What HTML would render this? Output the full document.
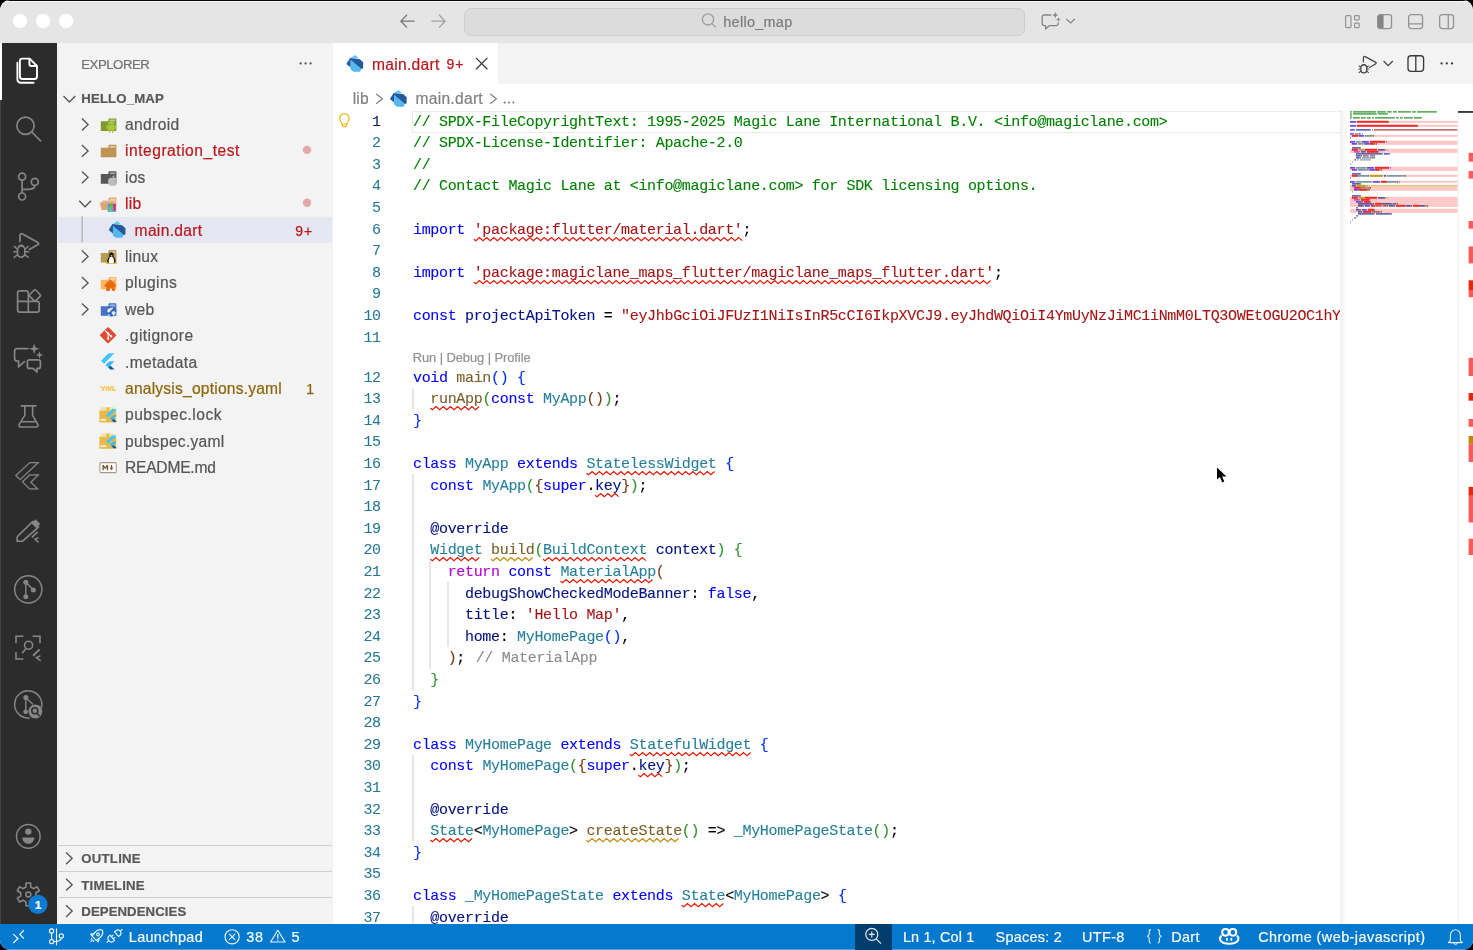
<!DOCTYPE html>
<html><head><meta charset="utf-8"><title>hello_map</title>
<style>
*{box-sizing:border-box;margin:0;padding:0}
html,body{width:1473px;height:950px;overflow:hidden;background:#000;}
body{font-family:"Liberation Sans",sans-serif;font-size:15.6px;color:#555;position:relative}
.win{will-change:transform;position:absolute;left:0;top:0;width:1473px;height:950px;border-radius:10px 10px 10px 10px;overflow:hidden;background:#fff}
.abs{position:absolute}
.t{position:absolute;white-space:pre;-webkit-text-stroke:0.2px}
.titlebar{position:absolute;left:0;top:0;width:1473px;height:43px;background:#e5e5e5;border-top:1px solid #05070c;box-shadow:inset 0 1px 0 #f7f7f7}
.act{position:absolute;left:0;top:43px;width:57.4px;height:881px;background:#2c2c2c;border-left:1px solid #454545}
.side{position:absolute;left:57.4px;top:43px;width:276px;height:881px;background:#f3f3f3}
.tabs{position:absolute;left:333.4px;top:43px;width:1140px;height:41.4px;background:#f3f3f3}
.tab{position:absolute;left:0;top:0;width:165px;height:41.4px;background:#fff}
.status{position:absolute;left:0;top:923.6px;width:1473px;height:26.4px;background:#0479ce;color:#fff;font-size:14.4px;box-shadow:inset 0 -1px 0 #5b9ada}
.mono{font-family:"Liberation Mono",monospace}
svg{position:absolute;overflow:visible}
.row{position:absolute;left:0;width:275.8px;height:26.4px}
.code{-webkit-text-stroke:0.1px;position:absolute;left:413px;max-width:927.2px;overflow:hidden;white-space:pre;font-family:"Liberation Mono",monospace;font-size:15px;letter-spacing:-0.331px;height:22px;line-height:22px;color:#000}
.ln{-webkit-text-stroke:0.05px;position:absolute;left:333.4px;width:47.4px;text-align:right;white-space:pre;font-family:"Liberation Mono",monospace;font-size:15px;letter-spacing:-0.331px;height:22px;line-height:22px;color:#237893}
.c{color:#008000}.k{color:#0000ff}.s{color:#a31515}.ty{color:#267f99}.f{color:#795e26}.v{color:#001080}
.r{color:#af00db}.b1{color:#0431fa}.b2{color:#319331}.b3{color:#7b3814}.g{color:#8a8a8a}
.ig{position:absolute;width:2px;background:#e6e6e6}
</style></head>
<body>
<div class="win">
<div class="titlebar"></div>
<div class="abs" style="left:13.4px;top:14px;width:14px;height:14px;border-radius:50%;background:#fff;box-shadow:0 0 0 0.5px #ececec"></div>
<div class="abs" style="left:36.4px;top:14px;width:14px;height:14px;border-radius:50%;background:#fff;box-shadow:0 0 0 0.5px #ececec"></div>
<div class="abs" style="left:59.4px;top:14px;width:14px;height:14px;border-radius:50%;background:#fff;box-shadow:0 0 0 0.5px #ececec"></div>
<svg style="left:399.50px;top:14.20px;" width="15" height="14.4" viewBox="0 0 15 14.4"><path d="M7 0.8 L0.9 7.2 L7 13.6 M0.9 7.2 H14.6" fill="none" stroke="#767676" stroke-width="1.25"/></svg>
<svg style="left:431.30px;top:14.20px;" width="15" height="14.4" viewBox="0 0 15 14.4"><path d="M8 0.8 L14.1 7.2 L8 13.6 M14.1 7.2 H0.4" fill="none" stroke="#a2a2a2" stroke-width="1.25"/></svg>
<div class="abs" style="left:463.5px;top:8.2px;width:561.8px;height:27.6px;border-radius:7px;background:#dcdcdc;border:1px solid #cdcdcd"></div>
<svg style="left:700.60px;top:13.40px;" width="16" height="16" viewBox="0 0 16 16"><circle cx="7" cy="6.4" r="5.6" fill="none" stroke="#9b9b9b" stroke-width="1.3"/><path d="M11 10.6 L14.8 14.4" stroke="#9b9b9b" stroke-width="1.3" fill="none"/></svg>
<div class="t" style="left:723.30px;top:10.00px;height:24px;line-height:24px;font-size:14.4px;color:#7b7b7b;letter-spacing:0.310px;">hello_map</div>
<svg style="left:1041.00px;top:11.50px;" width="20" height="18" viewBox="0 0 20 18"><path d="M10.2 3 H3.2 a2 2 0 0 0 -2 2 V11.6 a2 2 0 0 0 2 2 H4.6 V17 L8.6 13.6 H15.2 a2 2 0 0 0 2 -2 V10.4" fill="none" stroke="#858585" stroke-width="1.3" stroke-linejoin="round"/><path d="M14.30 0.00 L15.22 2.18 L17.40 3.10 L15.22 4.02 L14.30 6.20 L13.38 4.02 L11.20 3.10 L13.38 2.18 Z" fill="#858585"/><path d="M17.40 5.30 L18.08 6.92 L19.70 7.60 L18.08 8.28 L17.40 9.90 L16.72 8.28 L15.10 7.60 L16.72 6.92 Z" fill="#858585"/></svg>
<svg style="left:1065.60px;top:18.00px;" width="10" height="6" viewBox="0 0 10 6"><path d="M0.4 1 L4.6 5 L8.8 1" fill="none" stroke="#858585" stroke-width="1.2"/></svg>
<svg style="left:1345.00px;top:15.00px;" width="15.4" height="13.2" viewBox="0 0 15.4 13.2"><rect x="0.6" y="0.6" width="5.4" height="12" rx="1.2" fill="none" stroke="#939393" stroke-width="1.2"/><rect x="9.6" y="0.6" width="4.6" height="4.2" rx="0.8" fill="none" stroke="#939393" stroke-width="1.2"/><rect x="9.6" y="8.2" width="4.6" height="4.4" rx="0.8" fill="none" stroke="#939393" stroke-width="1.2"/></svg>
<svg style="left:1376.80px;top:14.00px;" width="15.2" height="15.2" viewBox="0 0 15.2 15.2"><rect x="0.65" y="0.65" width="13.9" height="13.9" rx="2.6" fill="none" stroke="#939393" stroke-width="1.3"/><path d="M3.4 0.65 H6.6 V14.55 H3.4 A2.75 2.75 0 0 1 0.65 11.8 V3.4 A2.75 2.75 0 0 1 3.4 0.65 Z" fill="#858585"/></svg>
<svg style="left:1408.00px;top:14.00px;" width="15.2" height="15.2" viewBox="0 0 15.2 15.2"><rect x="0.65" y="0.65" width="13.9" height="13.9" rx="2.6" fill="none" stroke="#939393" stroke-width="1.3"/><path d="M0.65 9.8 H14.55" stroke="#939393" stroke-width="1.3"/></svg>
<svg style="left:1438.80px;top:14.00px;" width="15.2" height="15.2" viewBox="0 0 15.2 15.2"><rect x="0.65" y="0.65" width="13.9" height="13.9" rx="2.6" fill="none" stroke="#939393" stroke-width="1.3"/><path d="M9.3 0.65 V14.55" stroke="#939393" stroke-width="1.3"/></svg>
<div class="act"></div>
<div class="abs" style="left:0;top:43px;width:1.7px;height:57.4px;background:#fff"></div>
<svg style="left:0;top:0" width="58" height="924" viewBox="0 0 58 924"><path d="M22.3 58.6 H29.6 L37 66 V76.6 a2.4 2.4 0 0 1 -2.4 2.4 H22.3 a2.4 2.4 0 0 1 -2.4 -2.4 V61 a2.4 2.4 0 0 1 2.4 -2.4 Z" fill="none" stroke="#fff" stroke-width="1.9" stroke-linejoin="round"/><path d="M29.4 58.8 V64 a2 2 0 0 0 2 2 H36.8" fill="none" stroke="#fff" stroke-width="1.9"/><path d="M17.4 62.6 V79.4 a3.4 3.4 0 0 0 3.4 3.4 H33.6" fill="none" stroke="#fff" stroke-width="1.9" stroke-linecap="round"/><circle cx="25.5" cy="125.8" r="8.6" fill="none" stroke="#868686" stroke-width="1.7"/><path d="M31.8 132 L40.6 140.8" stroke="#868686" stroke-width="1.7" stroke-linecap="round"/><circle cx="22.1" cy="176.6" r="3.5" fill="none" stroke="#868686" stroke-width="1.7"/><circle cx="22.1" cy="196.5" r="3.5" fill="none" stroke="#868686" stroke-width="1.7"/><circle cx="34.8" cy="181.9" r="3.5" fill="none" stroke="#868686" stroke-width="1.7"/><path d="M22.1 180.2 V192.9 M34.8 185.5 C34.8 189.6 30 189.4 22.1 189.4" fill="none" stroke="#868686" stroke-width="1.7"/><path d="M19.9 241.4 V235.6 a1.8 1.8 0 0 1 2.6 -1.7 L38 242.6 a1.1 1.1 0 0 1 0 2 L29.4 249.6" fill="none" stroke="#868686" stroke-width="1.7" stroke-linecap="round" stroke-linejoin="round"/><path d="M17.6 249.6 a3.6 3.6 0 0 1 7.2 0 V253.6 a3.6 3.6 0 0 1 -7.2 0 Z" fill="none" stroke="#868686" stroke-width="1.6"/><path d="M18.6 247 a2.7 2.7 0 0 1 5.2 0" fill="none" stroke="#868686" stroke-width="1.5"/><path d="M17.4 249.2 L14.2 246.4 M17.4 251.8 H13.8 M17.6 254.6 L14.2 257.4 M25 249.2 L28.2 246.4 M25 251.8 H28.6 M24.8 254.6 L28.2 257.4" stroke="#868686" stroke-width="1.4" stroke-linecap="round"/><path d="M28.3 301.4 V293 a2.2 2.2 0 0 0 -2.2 -2.2 H19.8 a2.2 2.2 0 0 0 -2.2 2.2 V310 a2.2 2.2 0 0 0 2.2 2.2 H37 a2.2 2.2 0 0 0 2.2 -2.2 V303.6 a2.2 2.2 0 0 0 -2.2 -2.2 H17.6 M28.3 301.4 V312.2" fill="none" stroke="#868686" stroke-width="1.7"/><rect x="-4.3" y="-4.3" width="8.6" height="8.6" rx="1.3" transform="translate(34.9 295.4) rotate(45)" fill="none" stroke="#868686" stroke-width="1.7"/><path d="M28 348.6 H17.2 a2.6 2.6 0 0 0 -2.6 2.6 V358.4 a2.6 2.6 0 0 0 2.6 2.6 H18.6 V366.8 L24.4 361.6" fill="none" stroke="#868686" stroke-width="1.7" stroke-linejoin="round" stroke-linecap="round"/><path d="M29.4 359.8 H38.4 a2 2 0 0 1 2 2 V366.4 a2 2 0 0 1 -2 2 H37 V372 L33 368.4 H29.4 a2 2 0 0 1 -2 -2 V361.8 a2 2 0 0 1 2 -2 Z" fill="none" stroke="#868686" stroke-width="1.7" stroke-linejoin="round"/><path d="M34.20 343.40 L35.50 347.50 L39.60 348.80 L35.50 350.10 L34.20 354.20 L32.90 350.10 L28.80 348.80 L32.90 347.50 Z" fill="#868686"/><path d="M39.50 351.20 L40.47 354.03 L43.30 355.00 L40.47 355.97 L39.50 358.80 L38.53 355.97 L35.70 355.00 L38.53 354.03 Z" fill="#868686"/><path d="M21.3 405.9 H35.8 M24.8 406 V415.4 L19.2 424.4 a1.7 1.7 0 0 0 1.5 2.6 H36.3 a1.7 1.7 0 0 0 1.5 -2.6 L32.6 415.4 V406 M21 421.8 H36.2" fill="none" stroke="#868686" stroke-width="1.6" stroke-linecap="round" stroke-linejoin="round"/><path d="M29.8 462.6 H38.2 L20 479.6 L15.8 475.4 Z" fill="none" stroke="#868686" stroke-width="1.3" stroke-linejoin="miter"/><path d="M29.8 474.9 H38.2 L30.9 482.2 L37.6 488.9 H29.6 L22.4 481.8 Z" fill="none" stroke="#868686" stroke-width="1.3" stroke-linejoin="miter"/><path d="M17.2 541.2 V536.8 L32.6 521.6 L38.4 527.2 L22.6 541.2 Z" fill="none" stroke="#868686" stroke-width="1.6" stroke-linejoin="miter"/><path d="M32.4 523.4 L35.6 520.2 L39.4 524 L36.2 527.2 Z" fill="#868686" stroke="#868686" stroke-width="1.2"/><path d="M37.6 531.8 L32 537.4" stroke="#868686" stroke-width="1.8"/><path d="M38.6 537.6 L35 539.2 L38.6 542.4" fill="none" stroke="#868686" stroke-width="1.5"/><circle cx="28.3" cy="589.4" r="13.6" fill="none" stroke="#868686" stroke-width="1.5"/><circle cx="25.8" cy="582.3" r="2.5" fill="#868686"/><circle cx="25.8" cy="596.8" r="2.5" fill="#868686"/><circle cx="33.4" cy="590" r="2.5" fill="#868686"/><path d="M25.8 582.3 V596.8 M25.8 582.3 L33.4 590" stroke="#868686" stroke-width="1.4"/><path d="M23.4 636.2 H16 V643.2 M32.6 636.2 H40 V643.2 M16 652 V659 H23.4" fill="none" stroke="#868686" stroke-width="1.6"/><circle cx="28.6" cy="645.2" r="4" fill="none" stroke="#868686" stroke-width="1.6"/><path d="M26 648.4 L22.2 653.2" stroke="#868686" stroke-width="1.6"/><path d="M39.6 649.4 L33 655.8" stroke="#868686" stroke-width="1.9"/><path d="M40.4 655.6 L36.4 657.6 L40.8 660.8" fill="none" stroke="#868686" stroke-width="1.6"/><path d="M41.4 707.8 A13.6 13.6 0 1 0 29.6 717.9" fill="none" stroke="#868686" stroke-width="1.5"/><circle cx="25.8" cy="697.5" r="2.5" fill="#868686"/><circle cx="25.6" cy="711.8" r="2.4" fill="#868686"/><path d="M25.8 697.5 V711.8 M25.8 697.5 L33 704.4" stroke="#868686" stroke-width="1.4"/><circle cx="35.4" cy="711.5" r="6.9" fill="#868686"/><circle cx="34.8" cy="710.8" r="3" fill="none" stroke="#2c2c2c" stroke-width="1.5"/><path d="M37 713.2 L39.6 716" stroke="#2c2c2c" stroke-width="1.5"/><circle cx="28.3" cy="836.4" r="11.8" fill="none" stroke="#868686" stroke-width="1.5"/><circle cx="28.3" cy="831.6" r="3.2" fill="#868686"/><path d="M22.2 837.4 H34.4 a6.1 6.4 0 0 1 -12.2 0 Z" fill="#868686"/><path d="M25.89 886.98 L26.01 883.03 L30.59 883.03 L30.71 886.98 L33.52 888.60 L37.00 886.73 L39.29 890.70 L35.93 892.78 L35.93 896.02 L39.29 898.10 L37.00 902.07 L33.52 900.20 L30.71 901.82 L30.59 905.77 L26.01 905.77 L25.89 901.82 L23.08 900.20 L19.60 902.07 L17.31 898.10 L20.67 896.02 L20.67 892.78 L17.31 890.70 L19.60 886.73 L23.08 888.60 Z" fill="none" stroke="#868686" stroke-width="1.6" stroke-linejoin="round"/><circle cx="28.3" cy="894.4" r="2.5" fill="none" stroke="#868686" stroke-width="1.5"/><circle cx="37.9" cy="904.4" r="9.6" fill="#0c7bd1"/></svg>
<div class="t" style="left:35.00px;top:892.70px;height:24px;line-height:24px;font-size:11.6px;color:#fff;font-weight:700;">1</div>
<div class="side"></div>
<div class="abs" style="left:57.6px;top:216.5px;width:274px;height:26px;background:#e4e6f1"></div>
<div class="t" style="left:81.30px;top:53.00px;height:24px;line-height:24px;font-size:13.2px;color:#6f6f6f;letter-spacing:-0.479px;">EXPLORER</div>
<div class="t" style="left:81.30px;top:87.00px;height:24px;line-height:24px;font-size:13.2px;color:#585858;font-weight:700;letter-spacing:0.141px;">HELLO_MAP</div>
<div class="t" style="left:125.00px;top:113.00px;height:24px;line-height:24px;font-size:15.6px;color:#555555;letter-spacing:0.367px;">android</div>
<div class="t" style="left:125.00px;top:139.00px;height:24px;line-height:24px;font-size:15.6px;color:#b8181c;letter-spacing:0.516px;">integration_test</div>
<div class="t" style="left:125.00px;top:166.00px;height:24px;line-height:24px;font-size:15.6px;color:#555555;letter-spacing:0.221px;">ios</div>
<div class="t" style="left:125.00px;top:192.00px;height:24px;line-height:24px;font-size:15.6px;color:#b8181c;letter-spacing:0.264px;">lib</div>
<div class="t" style="left:134.60px;top:219.00px;height:24px;line-height:24px;font-size:15.6px;color:#b8181c;letter-spacing:0.309px;">main.dart</div>
<div class="t" style="left:125.00px;top:245.00px;height:24px;line-height:24px;font-size:15.6px;color:#555555;letter-spacing:0.224px;">linux</div>
<div class="t" style="left:125.00px;top:271.00px;height:24px;line-height:24px;font-size:15.6px;color:#555555;letter-spacing:0.397px;">plugins</div>
<div class="t" style="left:125.00px;top:298.00px;height:24px;line-height:24px;font-size:15.6px;color:#555555;letter-spacing:0.264px;">web</div>
<div class="t" style="left:125.00px;top:324.00px;height:24px;line-height:24px;font-size:15.6px;color:#555555;letter-spacing:0.444px;">.gitignore</div>
<div class="t" style="left:125.00px;top:351.00px;height:24px;line-height:24px;font-size:15.6px;color:#555555;letter-spacing:0.338px;">.metadata</div>
<div class="t" style="left:125.00px;top:377.00px;height:24px;line-height:24px;font-size:15.6px;color:#8c650a;letter-spacing:0.211px;">analysis_options.yaml</div>
<div class="t" style="left:125.00px;top:403.00px;height:24px;line-height:24px;font-size:15.6px;color:#555555;letter-spacing:0.506px;">pubspec.lock</div>
<div class="t" style="left:125.00px;top:430.00px;height:24px;line-height:24px;font-size:15.6px;color:#555555;letter-spacing:0.282px;">pubspec.yaml</div>
<div class="t" style="left:125.00px;top:456.00px;height:24px;line-height:24px;font-size:15.6px;color:#555555;letter-spacing:-0.235px;">README.md</div>
<div class="t" style="left:295.20px;top:219.00px;height:24px;line-height:24px;font-size:14.04px;color:#b8181c;letter-spacing:0.900px;-webkit-text-stroke:0.25px;">9+</div>
<div class="t" style="left:306.20px;top:377.00px;height:24px;line-height:24px;font-size:14.04px;color:#8c650a;-webkit-text-stroke:0.25px;">1</div>
<div class="abs" style="left:57.6px;top:845px;width:274px;height:1px;background:#cfcfcf"></div>
<div class="t" style="left:81.30px;top:847.00px;height:24px;line-height:24px;font-size:13.2px;color:#585858;font-weight:700;letter-spacing:0.244px;">OUTLINE</div>
<div class="abs" style="left:57.6px;top:871px;width:274px;height:1px;background:#cfcfcf"></div>
<div class="t" style="left:81.30px;top:874.00px;height:24px;line-height:24px;font-size:13.2px;color:#585858;font-weight:700;letter-spacing:0.257px;">TIMELINE</div>
<div class="abs" style="left:57.6px;top:897px;width:274px;height:1px;background:#cfcfcf"></div>
<div class="t" style="left:81.30px;top:900.00px;height:24px;line-height:24px;font-size:13.2px;color:#585858;font-weight:700;letter-spacing:0.078px;">DEPENDENCIES</div>
<svg style="left:0;top:0" width="334" height="924" viewBox="0 0 334 924"><path d="M63.50 96.00 L69.40 102.00 L75.30 96.00" fill="none" stroke="#555" stroke-width="1.35"/><circle cx="300.6" cy="63.4" r="1.15" fill="#555"/><circle cx="305.6" cy="63.4" r="1.15" fill="#555"/><circle cx="310.6" cy="63.4" r="1.15" fill="#555"/><path d="M81.90 118.60 L88.10 124.50 L81.90 130.40" fill="none" stroke="#555" stroke-width="1.35"/><g transform="translate(100.80 118.40)"><path d="M8.1 0 H15 a0.6 0.6 0 0 1 0.6 0.6 V3 H7.2 Z" fill="#7f9a2c"/><path d="M9.3 1.2 H14.4 V3 H8.7 Z" fill="#f3f3f3" opacity="0.55"/><path d="M0 2.9 H15.6 V12.5 H0 Z" fill="#7f9a2c"/></g><g transform="translate(101.20 119.80)"><path d="M6.6 4.6 a3.4 3.2 0 0 1 6.8 0 Z" fill="#a6c63d"/><rect x="6.6" y="5.1" width="6.8" height="5.6" rx="0.8" fill="#a6c63d"/><rect x="4.9" y="5.2" width="1.3" height="4.2" rx="0.65" fill="#a6c63d"/><rect x="13.8" y="5.2" width="1.3" height="4.2" rx="0.65" fill="#a6c63d"/><rect x="7.8" y="10" width="1.4" height="3.2" rx="0.7" fill="#a6c63d"/><rect x="10.8" y="10" width="1.4" height="3.2" rx="0.7" fill="#a6c63d"/></g><path d="M81.90 145.00 L88.10 150.90 L81.90 156.80" fill="none" stroke="#555" stroke-width="1.35"/><g transform="translate(100.80 144.80)"><path d="M8.1 0 H15 a0.6 0.6 0 0 1 0.6 0.6 V3 H7.2 Z" fill="#c09553"/><path d="M9.3 1.2 H14.4 V3 H8.7 Z" fill="#f3f3f3" opacity="0.55"/><path d="M0 2.9 H15.6 V12.5 H0 Z" fill="#c09553"/></g><path d="M81.90 171.40 L88.10 177.30 L81.90 183.20" fill="none" stroke="#555" stroke-width="1.35"/><g transform="translate(100.80 171.20)"><path d="M8.1 0 H15 a0.6 0.6 0 0 1 0.6 0.6 V3 H7.2 Z" fill="#575757"/><path d="M9.3 1.2 H14.4 V3 H8.7 Z" fill="#f3f3f3" opacity="0.55"/><path d="M0 2.9 H15.6 V12.5 H0 Z" fill="#575757"/></g><g transform="translate(101.80 172.40)"><path d="M10.6 5.6 C8.2 4.6 6 6.4 6.2 9.2 C6.4 11.8 8 14 9.6 13.6 C10.4 13.3 10.9 13.3 11.7 13.6 C13.2 14 14.6 12.4 15.2 10.6 C13.4 9.8 13.4 7.2 15 6.4 C13.8 4.9 12 5 10.6 5.6 Z" fill="#bdbdbd"/><path d="M10.5 5.2 C10.4 3.9 11.4 2.9 12.6 2.8 C12.7 4.1 11.7 5.1 10.5 5.2 Z" fill="#bdbdbd"/></g><path d="M79.20 200.80 L85.10 206.80 L91.00 200.80" fill="none" stroke="#555" stroke-width="1.35"/><g transform="translate(100.80 197.60)"><path d="M8.1 0 H15 a0.6 0.6 0 0 1 0.6 0.6 V3 H7.2 Z" fill="#dea57a"/><path d="M9.3 1.2 H14.4 V3 H8.7 Z" fill="#f3f3f3" opacity="0.55"/><path d="M1.6 2.9 H15.6 V12.5 H1.6 Z" fill="#e9b48a"/><path d="M-1.2 5 H9.6 L11.6 12.5 H0.8 Z" fill="#dea57a"/><rect x="7" y="6" width="2.4" height="7.6" fill="#35b6e6"/><rect x="9.6" y="5.4" width="2.6" height="8.2" fill="#7cba3c"/><rect x="12.4" y="6" width="2.6" height="7.6" fill="#c534b4"/><rect x="6.6" y="13.4" width="8.8" height="0.9" fill="#35b6e6"/><rect x="7" y="7.4" width="2.4" height="0.7" fill="#1f8fb8"/><rect x="9.6" y="7" width="2.6" height="0.7" fill="#5a952a"/><rect x="12.4" y="7.4" width="2.6" height="0.7" fill="#962688"/></g><g transform="translate(108.60 220.80)"><path d="M8.9 0.1 L3.8 3.4 L12.5 3.8 Z" fill="#61c6fb"/><path d="M3.8 3.3 L13.6 4.5 L16.9 7.4 L16.8 13.8 L14.9 14.2 L3.0 4.4 Z" fill="#245a9c"/><path d="M3.4 3.9 L0.1 9.1 L4.4 12.6 L4.4 5 Z" fill="#1f5a9e"/><path d="M4.3 5.0 L15 14.1 L13.8 16.9 L7.2 16.9 L4.3 14.6 Z" fill="#55b7f0"/></g><path d="M81.90 250.60 L88.10 256.50 L81.90 262.40" fill="none" stroke="#555" stroke-width="1.35"/><g transform="translate(100.80 250.10)"><path d="M8.1 0 H15 a0.6 0.6 0 0 1 0.6 0.6 V3 H7.2 Z" fill="#b89a55"/><path d="M9.3 1.2 H14.4 V3 H8.7 Z" fill="#f3f3f3" opacity="0.55"/><path d="M0 2.9 H15.6 V12.5 H0 Z" fill="#b89a55"/></g><g transform="translate(100.80 250.10)"><ellipse cx="10.6" cy="4.8" rx="2.3" ry="2.6" fill="#1a1a1a"/><path d="M8.2 6.4 C6.6 8.6 6 11 6.6 13.4 H14.6 C15.2 11 14.6 8.6 13 6.4 Z" fill="#1a1a1a"/><path d="M9 7.2 C7.8 9.4 7.8 11.6 8.4 13.4 H12.8 C13.4 11.6 13.4 9.4 12.2 7.2 C11.4 6.4 9.8 6.4 9 7.2 Z" fill="#fff"/><path d="M9.4 5.6 L10.6 6.6 L11.8 5.6 L10.6 5 Z" fill="#f5b90b"/><path d="M5.4 12.6 C6.6 11.6 8.4 12.4 8.8 14 H5 Z" fill="#f5b90b"/><path d="M15.8 12.6 C14.6 11.6 12.8 12.4 12.4 14 H16.2 Z" fill="#f5b90b"/></g><path d="M81.90 277.00 L88.10 282.90 L81.90 288.80" fill="none" stroke="#555" stroke-width="1.35"/><g transform="translate(100.80 276.90)"><path d="M8.1 0 H15 a0.6 0.6 0 0 1 0.6 0.6 V3 H7.2 Z" fill="#ffb560"/><path d="M9.3 1.2 H14.4 V3 H8.7 Z" fill="#f3f3f3" opacity="0.55"/><path d="M0 2.9 H15.6 V12.5 H0 Z" fill="#ffb560"/></g><g transform="translate(99.50 274.60)"><g transform="scale(1.1)"><path d="M6.4 6.4 H8.6 C8 4.2 11.6 4.2 11 6.4 H13.6 V8.8 C15.8 8.2 15.8 11.6 13.6 11 V13.6 H11.4 C11.8 11.8 9 11.8 9.4 13.6 H6.4 V11.2 C4 11.8 4 8.2 6.4 8.8 Z" fill="#e96a0c"/><path d="M6.2 12.6 H9.2 V15 H6.2 Z M11.6 12.6 H14 V15 H11.6 Z" fill="#e96a0c"/></g></g><path d="M81.90 303.40 L88.10 309.30 L81.90 315.20" fill="none" stroke="#555" stroke-width="1.35"/><g transform="translate(100.80 303.30)"><path d="M8.1 0 H15 a0.6 0.6 0 0 1 0.6 0.6 V3 H7.2 Z" fill="#4a72c9"/><path d="M9.3 1.2 H14.4 V3 H8.7 Z" fill="#f3f3f3" opacity="0.55"/><path d="M0 2.9 H15.6 V12.5 H0 Z" fill="#4a72c9"/></g><g transform="translate(100.80 302.20)"><circle cx="10.6" cy="9.4" r="5" fill="#2f66b8"/><path d="M6.4 8 C8 5.2 10 6.8 11.6 4.8 C12.6 5.4 12 7 10.6 7.6 C9.6 8.4 9.8 10 8 10.4 C7 10.6 6.2 9.2 6.4 8 Z" fill="#e9f1fb"/><path d="M11 9.6 C12.4 8.6 14.2 9 15 10.4 C14.6 12 13.6 13.2 12.4 13.8 C12.4 12.4 10.2 11.4 11 9.6 Z" fill="#dce9f8"/><path d="M6.8 12 C8 11.6 9.2 12.4 9.4 14 C8.2 13.8 7.2 13 6.8 12 Z" fill="#cfe0f5"/></g><g transform="translate(99.56 326.80)"><rect x="-6" y="-6" width="12" height="12" rx="1" transform="translate(8.5 8.5) rotate(45)" fill="#dd4c35"/><path d="M5.4 3.6 L8.6 6.8 V11.6 M8.6 6.8 L11.4 9.4" stroke="#fff" stroke-width="1.1" fill="none"/><circle cx="8.6" cy="6.6" r="1.15" fill="#fff"/><circle cx="8.6" cy="12" r="1.15" fill="#fff"/><circle cx="11.6" cy="9.6" r="1.15" fill="#fff"/></g><g transform="translate(101.00 353.20) scale(1.0)"><path d="M7.6 0 H13.5 L3 10.5 L0 7.6 Z" fill="#42c5fb"/><path d="M8.5 8 H13.5 L7.2 14.4 L4.4 11.8 Z" fill="#3fb9f5"/><path d="M7.2 14.4 L9.4 16.4 H13.5 L9.4 12.2 Z" fill="#0b5a9c"/></g><g transform="translate(99.4 386.10) scale(0.965)"><g transform="translate(0.00 0.00)"><path d="M0 0 H2 L3.6 1.8 L5.2 0 H7.2 L4.6 2.8 V5 H2.6 V2.8 Z" fill="#f9cb63"/><path d="M6 5 L7.6 0 H9.4 L10.4 2.6 L11.4 0 H13.2 L12 5 H10.6 L11.2 2.4 L10.2 5 H9.2 L8.4 2.4 L7.6 5 Z" fill="#f9cb63"/><path d="M13.2 0 H15 V3.6 H17 V5 H13.2 Z" fill="#f9cb63"/></g></g><g transform="translate(99.40 407.20)"><path d="M2.4 0 H14.4 L16.8 3.4 H0 Z" fill="#f4dfa4"/><path d="M7.2 0 H9.8 L10.4 3.4 H6.6 Z" fill="#e9bd55"/><path d="M0 3.3 H16.8 V14.4 a0.8 0.8 0 0 1 -0.8 0.8 H0.8 a0.8 0.8 0 0 1 -0.8 -0.8 Z" fill="#e8b94b"/><rect x="1.3" y="11.7" width="5.4" height="1.7" fill="#fdf6e3"/></g><g transform="translate(106.20 409.00) scale(0.79)"><path d="M7.6 0 H13.5 L3 10.5 L0 7.6 Z" fill="#42c5fb"/><path d="M8.5 8 H13.5 L7.2 14.4 L4.4 11.8 Z" fill="#3fb9f5"/><path d="M7.2 14.4 L9.4 16.4 H13.5 L9.4 12.2 Z" fill="#0b5a9c"/></g><g transform="translate(99.40 433.60)"><path d="M2.4 0 H14.4 L16.8 3.4 H0 Z" fill="#f4dfa4"/><path d="M7.2 0 H9.8 L10.4 3.4 H6.6 Z" fill="#e9bd55"/><path d="M0 3.3 H16.8 V14.4 a0.8 0.8 0 0 1 -0.8 0.8 H0.8 a0.8 0.8 0 0 1 -0.8 -0.8 Z" fill="#e8b94b"/><rect x="1.3" y="11.7" width="5.4" height="1.7" fill="#fdf6e3"/></g><g transform="translate(106.20 435.40) scale(0.79)"><path d="M7.6 0 H13.5 L3 10.5 L0 7.6 Z" fill="#42c5fb"/><path d="M8.5 8 H13.5 L7.2 14.4 L4.4 11.8 Z" fill="#3fb9f5"/><path d="M7.2 14.4 L9.4 16.4 H13.5 L9.4 12.2 Z" fill="#0b5a9c"/></g><g transform="translate(99.40 462.10)"><rect x="0.5" y="0.5" width="16.4" height="10" rx="1" fill="#fff" stroke="#a89888" stroke-width="1.1"/><path d="M3 8.2 V3 H4.4 L5.9 5.2 L7.4 3 H8.8 V8.2 H7.4 V5.2 L5.9 7.2 L4.4 5.2 V8.2 Z" fill="#7a5636"/><path d="M11.4 3 H12.8 V5.6 H14.2 L12.1 8.2 L10 5.6 H11.4 Z" fill="#7a5636"/></g><circle cx="307" cy="149.9" r="4.2" fill="#e3a9a9"/><circle cx="307" cy="202.7" r="4.2" fill="#e3a9a9"/><rect x="81.6" y="216" width="1.1" height="26.4" fill="#a9a9a9"/><path d="M66.00 852.40 L72.20 858.30 L66.00 864.20" fill="none" stroke="#555" stroke-width="1.35"/><path d="M66.00 878.80 L72.20 884.70 L66.00 890.60" fill="none" stroke="#555" stroke-width="1.35"/><path d="M66.00 905.20 L72.20 911.10 L66.00 917.00" fill="none" stroke="#555" stroke-width="1.35"/></svg>
<div class="tabs"><div class="tab"></div></div>
<div class="t" style="left:372.00px;top:53.00px;height:24px;line-height:24px;font-size:15.6px;color:#b8181c;letter-spacing:0.287px;">main.dart</div>
<div class="t" style="left:446.60px;top:52.00px;height:24px;line-height:24px;font-size:14.04px;color:#b8181c;letter-spacing:0.800px;-webkit-text-stroke:0.25px;">9+</div>
<div class="t" style="left:352.80px;top:87.00px;height:24px;line-height:24px;font-size:15.6px;color:#808080;letter-spacing:0.097px;">lib</div>
<div class="t" style="left:415.40px;top:87.00px;height:24px;line-height:24px;font-size:15.6px;color:#808080;letter-spacing:0.287px;">main.dart</div>
<div class="abs" style="left:412.2px;top:110.8px;width:929px;height:22px;border:1.4px solid #ebebeb;border-right:0"></div>
<div class="ig" style="left:412.00px;top:387.80px;height:21.60px"></div>
<div class="ig" style="left:412.00px;top:474.20px;height:216.00px"></div>
<div class="ig" style="left:412.00px;top:755.00px;height:86.40px"></div>
<div class="ig" style="left:412.00px;top:906.20px;height:21.60px"></div>
<div class="ig" style="left:429.20px;top:560.60px;height:108.00px"></div>
<div class="ig" style="left:447.00px;top:582.20px;height:64.80px"></div>
<div class="ln" style="top:112px;color:#0b216f;">1</div><div class="code" style="top:112px"><span class="c">// SPDX-FileCopyrightText: 1995-2025 Magic Lane International B.V. &lt;info@magiclane.com&gt;</span></div>
<div class="ln" style="top:133px;">2</div><div class="code" style="top:133px"><span class="c">// SPDX-License-Identifier: Apache-2.0</span></div>
<div class="ln" style="top:155px;">3</div><div class="code" style="top:155px"><span class="c">//</span></div>
<div class="ln" style="top:176px;">4</div><div class="code" style="top:176px"><span class="c">// Contact Magic Lane at &lt;info@magiclane.com&gt; for SDK licensing options.</span></div>
<div class="ln" style="top:198px;">5</div>
<div class="ln" style="top:220px;">6</div><div class="code" style="top:220px"><span class="k">import</span> <span class="s">'package:flutter/material.dart'</span>;</div>
<div class="ln" style="top:241px;">7</div>
<div class="ln" style="top:263px;">8</div><div class="code" style="top:263px"><span class="k">import</span> <span class="s">'package:magiclane_maps_flutter/magiclane_maps_flutter.dart'</span>;</div>
<div class="ln" style="top:284px;">9</div>
<div class="ln" style="top:306px;">10</div><div class="code" style="top:306px"><span class="k">const</span> <span class="v">projectApiToken</span> = <span class="s">"eyJhbGciOiJFUzI1NiIsInR5cCI6IkpXVCJ9.eyJhdWQiOiI4YmUyNzJiMC1iNmM0LTQ3OWEtOGU2OC1hYzNjYTI0ZDkxNmUiLCJleHAiOjE3NjI4MTkyMDB9"</span>;</div>
<div class="ln" style="top:328px;">11</div>
<div class="ln" style="top:368px;">12</div><div class="code" style="top:368px"><span class="k">void</span> <span class="f">main</span><span class="b1">()</span> <span class="b1">{</span></div>
<div class="ln" style="top:389px;">13</div><div class="code" style="top:389px">  <span class="f">runApp</span><span class="b2">(</span><span class="k">const</span> <span class="ty">MyApp</span><span class="b3">()</span><span class="b2">)</span>;</div>
<div class="ln" style="top:411px;">14</div><div class="code" style="top:411px"><span class="b1">}</span></div>
<div class="ln" style="top:432px;">15</div>
<div class="ln" style="top:454px;">16</div><div class="code" style="top:454px"><span class="k">class</span> <span class="ty">MyApp</span> <span class="k">extends</span> <span class="ty">StatelessWidget</span> <span class="b1">{</span></div>
<div class="ln" style="top:476px;">17</div><div class="code" style="top:476px">  <span class="k">const</span> <span class="ty">MyApp</span><span class="b2">(</span><span class="b3">{</span><span class="k">super</span>.<span class="v">key</span><span class="b3">}</span><span class="b2">)</span>;</div>
<div class="ln" style="top:497px;">18</div>
<div class="ln" style="top:519px;">19</div><div class="code" style="top:519px">  <span class="v">@override</span></div>
<div class="ln" style="top:540px;">20</div><div class="code" style="top:540px">  <span class="ty">Widget</span> <span class="f">build</span><span class="b2">(</span><span class="ty">BuildContext</span> <span class="v">context</span><span class="b2">)</span> <span class="b2">{</span></div>
<div class="ln" style="top:562px;">21</div><div class="code" style="top:562px">    <span class="r">return</span> <span class="k">const</span> <span class="ty">MaterialApp</span><span class="b3">(</span></div>
<div class="ln" style="top:584px;">22</div><div class="code" style="top:584px">      <span class="v">debugShowCheckedModeBanner</span>: <span class="k">false</span>,</div>
<div class="ln" style="top:605px;">23</div><div class="code" style="top:605px">      <span class="v">title</span>: <span class="s">'Hello Map'</span>,</div>
<div class="ln" style="top:627px;">24</div><div class="code" style="top:627px">      <span class="v">home</span>: <span class="ty">MyHomePage</span><span class="b1">()</span>,</div>
<div class="ln" style="top:648px;">25</div><div class="code" style="top:648px">    <span class="b3">)</span>; <span class="g" style="margin-left:2px">// MaterialApp</span></div>
<div class="ln" style="top:670px;">26</div><div class="code" style="top:670px">  <span class="b2">}</span></div>
<div class="ln" style="top:692px;">27</div><div class="code" style="top:692px"><span class="b1">}</span></div>
<div class="ln" style="top:713px;">28</div>
<div class="ln" style="top:735px;">29</div><div class="code" style="top:735px"><span class="k">class</span> <span class="ty">MyHomePage</span> <span class="k">extends</span> <span class="ty">StatefulWidget</span> <span class="b1">{</span></div>
<div class="ln" style="top:756px;">30</div><div class="code" style="top:756px">  <span class="k">const</span> <span class="ty">MyHomePage</span><span class="b2">(</span><span class="b3">{</span><span class="k">super</span>.<span class="v">key</span><span class="b3">}</span><span class="b2">)</span>;</div>
<div class="ln" style="top:778px;">31</div>
<div class="ln" style="top:800px;">32</div><div class="code" style="top:800px">  <span class="v">@override</span></div>
<div class="ln" style="top:821px;">33</div><div class="code" style="top:821px">  <span class="ty">State</span>&lt;<span class="ty">MyHomePage</span>&gt; <span class="f">createState</span><span class="b2">()</span> =&gt; <span class="ty">_MyHomePageState</span><span class="b2">()</span>;</div>
<div class="ln" style="top:843px;">34</div><div class="code" style="top:843px"><span class="b1">}</span></div>
<div class="ln" style="top:864px;">35</div>
<div class="ln" style="top:886px;">36</div><div class="code" style="top:886px"><span class="k">class</span> <span class="ty">_MyHomePageState</span> <span class="k">extends</span> <span class="ty">State</span>&lt;<span class="ty">MyHomePage</span>&gt; <span class="b1">{</span></div>
<div class="ln" style="top:908px;">37</div><div class="code" style="top:908px">  <span class="v">@override</span></div>
<div class="t" style="left:412.70px;top:346.00px;height:24px;line-height:24px;font-size:12.9px;color:#919191;letter-spacing:-0.062px;">Run | Debug | Profile</div>
<svg style="left:0;top:0" width="1473" height="924" viewBox="0 0 1473 924"><g transform="translate(346.30 54.80)"><path d="M8.9 0.1 L3.8 3.4 L12.5 3.8 Z" fill="#61c6fb"/><path d="M3.8 3.3 L13.6 4.5 L16.9 7.4 L16.8 13.8 L14.9 14.2 L3.0 4.4 Z" fill="#245a9c"/><path d="M3.4 3.9 L0.1 9.1 L4.4 12.6 L4.4 5 Z" fill="#1f5a9e"/><path d="M4.3 5.0 L15 14.1 L13.8 16.9 L7.2 16.9 L4.3 14.6 Z" fill="#55b7f0"/></g><path d="M476 57.9 L487.4 69.3 M487.4 57.9 L476 69.3" stroke="#3b3b3b" stroke-width="1.3"/><g transform="translate(389.80 89.80)"><path d="M8.9 0.1 L3.8 3.4 L12.5 3.8 Z" fill="#61c6fb"/><path d="M3.8 3.3 L13.6 4.5 L16.9 7.4 L16.8 13.8 L14.9 14.2 L3.0 4.4 Z" fill="#245a9c"/><path d="M3.4 3.9 L0.1 9.1 L4.4 12.6 L4.4 5 Z" fill="#1f5a9e"/><path d="M4.3 5.0 L15 14.1 L13.8 16.9 L7.2 16.9 L4.3 14.6 Z" fill="#55b7f0"/></g><path d="M376.2 93.9 L382.4 98.8 L376.2 103.7" fill="none" stroke="#808080" stroke-width="1.25"/><path d="M490.2 93.9 L496.4 98.8 L490.2 103.7" fill="none" stroke="#808080" stroke-width="1.25"/><circle cx="504.6" cy="102.6" r="1.05" fill="#808080"/><circle cx="509" cy="102.6" r="1.05" fill="#808080"/><circle cx="513.4" cy="102.6" r="1.05" fill="#808080"/><path d="M1363.4 62 V57.6 a1.2 1.2 0 0 1 1.8 -1 L1375.8 62.4 a0.8 0.8 0 0 1 0 1.4 L1369.6 67.4" fill="none" stroke="#444" stroke-width="1.2" stroke-linecap="round" stroke-linejoin="round"/><path d="M1360.9 67.8 a2.9 2.9 0 0 1 5.8 0 V70 a2.9 2.9 0 0 1 -5.8 0 Z" fill="none" stroke="#444" stroke-width="1.2"/><path d="M1361.7 66 a2.2 2.2 0 0 1 4.2 0" fill="none" stroke="#444" stroke-width="1.1"/><path d="M1360.8 67.2 L1358.8 65.6 M1360.8 69 H1358.4 M1361 70.9 L1358.8 72.8 M1366.8 67.2 L1368.8 65.6 M1366.8 69 H1369.2 M1366.6 70.9 L1368.8 72.8" stroke="#444" stroke-width="1.1"/><path d="M1383.6 61 L1388.2 65.6 L1392.8 61" fill="none" stroke="#444" stroke-width="1.25"/><rect x="1408" y="55.7" width="15.6" height="15.6" rx="3" fill="none" stroke="#3b3b3b" stroke-width="1.35"/><path d="M1415.8 55.7 V71.3" stroke="#3b3b3b" stroke-width="1.35"/><circle cx="1441.6" cy="63.4" r="1.15" fill="#3b3b3b"/><circle cx="1446.8" cy="63.4" r="1.15" fill="#3b3b3b"/><circle cx="1452" cy="63.4" r="1.15" fill="#3b3b3b"/><path d="M341.6 122.3 A4.75 4.75 0 1 1 347.2 122.3 L346.7 125 Q346.6 126.7 344.4 126.7 Q342.2 126.7 342.1 125 Z" fill="none" stroke="#e3bb22" stroke-width="1.25" stroke-linejoin="round"/><path d="M342.2 124.2 H346.6" stroke="#e3bb22" stroke-width="1.1"/><path d="M473.7 239.2 L475.8 240.7 L479.4 237.5 L483.0 240.7 L486.6 237.5 L490.2 240.7 L493.8 237.5 L497.4 240.7 L501.0 237.5 L504.6 240.7 L508.2 237.5 L511.8 240.7 L515.4 237.5 L519.0 240.7 L522.6 237.5 L526.2 240.7 L529.8 237.5 L533.4 240.7 L537.0 237.5 L540.6 240.7 L544.2 237.5 L547.8 240.7 L551.4 237.5 L555.0 240.7 L558.6 237.5 L562.2 240.7 L565.8 237.5 L569.4 240.7 L573.0 237.5 L576.6 240.7 L580.2 237.5 L583.8 240.7 L587.4 237.5 L591.0 240.7 L594.6 237.5 L598.2 240.7 L601.8 237.5 L605.4 240.7 L609.0 237.5 L612.6 240.7 L616.2 237.5 L619.8 240.7 L623.4 237.5 L627.0 240.7 L630.6 237.5 L634.2 240.7 L637.8 237.5 L641.4 240.7 L645.0 237.5 L648.6 240.7 L652.2 237.5 L655.8 240.7 L659.4 237.5 L663.0 240.7 L666.6 237.5 L670.2 240.7 L673.8 237.5 L677.4 240.7 L681.0 237.5 L684.6 240.7 L688.2 237.5 L691.8 240.7 L695.4 237.5 L699.0 240.7 L702.6 237.5 L706.2 240.7 L709.8 237.5 L713.4 240.7 L717.0 237.5 L720.6 240.7 L724.2 237.5 L727.8 240.7 L731.4 237.5 L735.0 240.7 L738.6 237.5 L742.2 240.7" fill="none" stroke="#e51400" stroke-width="1.12"/><path d="M473.7 282.2 L475.8 283.7 L479.4 280.5 L483.0 283.7 L486.6 280.5 L490.2 283.7 L493.8 280.5 L497.4 283.7 L501.0 280.5 L504.6 283.7 L508.2 280.5 L511.8 283.7 L515.4 280.5 L519.0 283.7 L522.6 280.5 L526.2 283.7 L529.8 280.5 L533.4 283.7 L537.0 280.5 L540.6 283.7 L544.2 280.5 L547.8 283.7 L551.4 280.5 L555.0 283.7 L558.6 280.5 L562.2 283.7 L565.8 280.5 L569.4 283.7 L573.0 280.5 L576.6 283.7 L580.2 280.5 L583.8 283.7 L587.4 280.5 L591.0 283.7 L594.6 280.5 L598.2 283.7 L601.8 280.5 L605.4 283.7 L609.0 280.5 L612.6 283.7 L616.2 280.5 L619.8 283.7 L623.4 280.5 L627.0 283.7 L630.6 280.5 L634.2 283.7 L637.8 280.5 L641.4 283.7 L645.0 280.5 L648.6 283.7 L652.2 280.5 L655.8 283.7 L659.4 280.5 L663.0 283.7 L666.6 280.5 L670.2 283.7 L673.8 280.5 L677.4 283.7 L681.0 280.5 L684.6 283.7 L688.2 280.5 L691.8 283.7 L695.4 280.5 L699.0 283.7 L702.6 280.5 L706.2 283.7 L709.8 280.5 L713.4 283.7 L717.0 280.5 L720.6 283.7 L724.2 280.5 L727.8 283.7 L731.4 280.5 L735.0 283.7 L738.6 280.5 L742.2 283.7 L745.8 280.5 L749.4 283.7 L753.0 280.5 L756.6 283.7 L760.2 280.5 L763.8 283.7 L767.4 280.5 L771.0 283.7 L774.6 280.5 L778.2 283.7 L781.8 280.5 L785.4 283.7 L789.0 280.5 L792.6 283.7 L796.2 280.5 L799.8 283.7 L803.4 280.5 L807.0 283.7 L810.6 280.5 L814.2 283.7 L817.8 280.5 L821.4 283.7 L825.0 280.5 L828.6 283.7 L832.2 280.5 L835.8 283.7 L839.4 280.5 L843.0 283.7 L846.6 280.5 L850.2 283.7 L853.8 280.5 L857.4 283.7 L861.0 280.5 L864.6 283.7 L868.2 280.5 L871.8 283.7 L875.4 280.5 L879.0 283.7 L882.6 280.5 L886.2 283.7 L889.8 280.5 L893.4 283.7 L897.0 280.5 L900.6 283.7 L904.2 280.5 L907.8 283.7 L911.4 280.5 L915.0 283.7 L918.6 280.5 L922.2 283.7 L925.8 280.5 L929.4 283.7 L933.0 280.5 L936.6 283.7 L940.2 280.5 L943.8 283.7 L947.4 280.5 L951.0 283.7 L954.6 280.5 L958.2 283.7 L961.8 280.5 L965.4 283.7 L969.0 280.5 L972.6 283.7 L976.2 280.5 L979.8 283.7 L983.4 280.5 L987.0 283.7 L990.6 280.5" fill="none" stroke="#e51400" stroke-width="1.12"/><path d="M430.3 408.2 L432.4 409.7 L436.0 406.5 L439.6 409.7 L443.2 406.5 L446.8 409.7 L450.4 406.5 L454.0 409.7 L457.6 406.5 L461.2 409.7 L464.8 406.5 L468.4 409.7 L472.0 406.5 L475.6 409.7 L479.2 406.5" fill="none" stroke="#e51400" stroke-width="1.12"/><path d="M586.4 473.2 L588.5 474.7 L592.1 471.5 L595.7 474.7 L599.3 471.5 L602.9 474.7 L606.5 471.5 L610.1 474.7 L613.7 471.5 L617.3 474.7 L620.9 471.5 L624.5 474.7 L628.1 471.5 L631.7 474.7 L635.3 471.5 L638.9 474.7 L642.5 471.5 L646.1 474.7 L649.7 471.5 L653.3 474.7 L656.9 471.5 L660.5 474.7 L664.1 471.5 L667.7 474.7 L671.3 471.5 L674.9 474.7 L678.5 471.5 L682.1 474.7 L685.7 471.5 L689.3 474.7 L692.9 471.5 L696.5 474.7 L700.1 471.5 L703.7 474.7 L707.3 471.5 L710.9 474.7 L714.5 471.5" fill="none" stroke="#e51400" stroke-width="1.12"/><path d="M595.0 495.2 L597.1 496.7 L600.7 493.5 L604.3 496.7 L607.9 493.5 L611.5 496.7 L615.1 493.5 L618.7 496.7" fill="none" stroke="#e51400" stroke-width="1.12"/><path d="M430.3 559.2 L432.4 560.7 L436.0 557.5 L439.6 560.7 L443.2 557.5 L446.8 560.7 L450.4 557.5 L454.0 560.7 L457.6 557.5 L461.2 560.7 L464.8 557.5 L468.4 560.7 L472.0 557.5 L475.6 560.7 L479.2 557.5" fill="none" stroke="#e51400" stroke-width="1.12"/><path d="M491.0 559.2 L493.1 560.7 L496.7 557.5 L500.3 560.7 L503.9 557.5 L507.5 560.7 L511.1 557.5 L514.7 560.7 L518.3 557.5 L521.9 560.7 L525.5 557.5 L529.1 560.7 L532.7 557.5" fill="none" stroke="#bf8803" stroke-width="1.12"/><path d="M543.0 559.2 L545.1 560.7 L548.7 557.5 L552.3 560.7 L555.9 557.5 L559.5 560.7 L563.1 557.5 L566.7 560.7 L570.3 557.5 L573.9 560.7 L577.5 557.5 L581.1 560.7 L584.7 557.5 L588.3 560.7 L591.9 557.5 L595.5 560.7 L599.1 557.5 L602.7 560.7 L606.3 557.5 L609.9 560.7 L613.5 557.5 L617.1 560.7 L620.7 557.5 L624.3 560.7 L627.9 557.5 L631.5 560.7 L635.1 557.5 L638.7 560.7 L642.3 557.5 L645.9 560.7" fill="none" stroke="#e51400" stroke-width="1.12"/><path d="M560.4 581.2 L562.5 582.7 L566.1 579.5 L569.7 582.7 L573.3 579.5 L576.9 582.7 L580.5 579.5 L584.1 582.7 L587.7 579.5 L591.3 582.7 L594.9 579.5 L598.5 582.7 L602.1 579.5 L605.7 582.7 L609.3 579.5 L612.9 582.7 L616.5 579.5 L620.1 582.7 L623.7 579.5 L627.3 582.7 L630.9 579.5 L634.5 582.7 L638.1 579.5 L641.7 582.7 L645.3 579.5 L648.9 582.7 L652.5 579.5" fill="none" stroke="#e51400" stroke-width="1.12"/><path d="M629.7 754.2 L631.8 755.7 L635.4 752.5 L639.0 755.7 L642.6 752.5 L646.2 755.7 L649.8 752.5 L653.4 755.7 L657.0 752.5 L660.6 755.7 L664.2 752.5 L667.8 755.7 L671.4 752.5 L675.0 755.7 L678.6 752.5 L682.2 755.7 L685.8 752.5 L689.4 755.7 L693.0 752.5 L696.6 755.7 L700.2 752.5 L703.8 755.7 L707.4 752.5 L711.0 755.7 L714.6 752.5 L718.2 755.7 L721.8 752.5 L725.4 755.7 L729.0 752.5 L732.6 755.7 L736.2 752.5 L739.8 755.7 L743.4 752.5 L747.0 755.7 L750.6 752.5" fill="none" stroke="#e51400" stroke-width="1.12"/><path d="M638.4 775.2 L640.5 776.7 L644.1 773.5 L647.7 776.7 L651.3 773.5 L654.9 776.7 L658.5 773.5 L662.1 776.7" fill="none" stroke="#e51400" stroke-width="1.12"/><path d="M430.3 840.2 L432.4 841.7 L436.0 838.5 L439.6 841.7 L443.2 838.5 L446.8 841.7 L450.4 838.5 L454.0 841.7 L457.6 838.5 L461.2 841.7 L464.8 838.5 L468.4 841.7 L472.0 838.5" fill="none" stroke="#e51400" stroke-width="1.12"/><path d="M586.4 840.2 L588.5 841.7 L592.1 838.5 L595.7 841.7 L599.3 838.5 L602.9 841.7 L606.5 838.5 L610.1 841.7 L613.7 838.5 L617.3 841.7 L620.9 838.5 L624.5 841.7 L628.1 838.5 L631.7 841.7 L635.3 838.5 L638.9 841.7 L642.5 838.5 L646.1 841.7 L649.7 838.5 L653.3 841.7 L656.9 838.5 L660.5 841.7 L664.1 838.5 L667.7 841.7 L671.3 838.5 L674.9 841.7 L678.5 838.5" fill="none" stroke="#bf8803" stroke-width="1.12"/><path d="M681.7 905.2 L683.8 906.7 L687.4 903.5 L691.0 906.7 L694.6 903.5 L698.2 906.7 L701.8 903.5 L705.4 906.7 L709.0 903.5 L712.6 906.7 L716.2 903.5 L719.8 906.7 L723.4 903.5" fill="none" stroke="#e51400" stroke-width="1.12"/></svg>
<div class="abs" style="left:1340.4px;top:110.4px;width:7px;height:813.2px;background:linear-gradient(to right,rgba(0,0,0,0.055),rgba(0,0,0,0))"></div>
<svg style="left:0;top:0" width="1473" height="924" viewBox="0 0 1473 924"><rect x="1350.0" y="120.8" width="107.6" height="2" fill="#ffc4c4"/><rect x="1350.0" y="124.8" width="107.6" height="2" fill="#ffc4c4"/><rect x="1350.0" y="134.8" width="107.6" height="2" fill="#ffc4c4"/><rect x="1350.0" y="140.8" width="107.6" height="2" fill="#ffc4c4"/><rect x="1350.0" y="142.8" width="107.6" height="2" fill="#ffc4c4"/><rect x="1350.0" y="148.8" width="107.6" height="2" fill="#ffc4c4"/><rect x="1350.0" y="150.8" width="107.6" height="2" fill="#ffc4c4"/><rect x="1350.0" y="166.8" width="107.6" height="2" fill="#ffc4c4"/><rect x="1350.0" y="168.8" width="107.6" height="2" fill="#ffc4c4"/><rect x="1350.0" y="174.8" width="107.6" height="2" fill="#ffc4c4"/><rect x="1350.0" y="180.8" width="107.6" height="2" fill="#ffc4c4"/><rect x="1350.0" y="186.8" width="107.6" height="2" fill="#ffc4c4"/><rect x="1350.0" y="188.8" width="107.6" height="2" fill="#ffc4c4"/><rect x="1350.0" y="196.8" width="107.6" height="2" fill="#ffc4c4"/><rect x="1350.0" y="198.8" width="107.6" height="2" fill="#ffc4c4"/><rect x="1350.0" y="200.8" width="107.6" height="2" fill="#ffc4c4"/><rect x="1350.0" y="202.8" width="107.6" height="2" fill="#ffc4c4"/><rect x="1350.0" y="204.8" width="107.6" height="2" fill="#ffc4c4"/><rect x="1350.0" y="208.8" width="107.6" height="2" fill="#ffc4c4"/><rect x="1350.0" y="210.8" width="107.6" height="2" fill="#ffc4c4"/><rect x="1350.0" y="184.8" width="107.6" height="2" fill="#e6c98a"/><rect x="1350.0" y="111.0" width="1.8" height="1.7" fill="#008000" opacity="0.62"/><rect x="1353.0" y="111.0" width="22.8" height="1.7" fill="#008000" opacity="0.62"/><rect x="1377.0" y="111.0" width="8.8" height="1.7" fill="#008000" opacity="0.62"/><rect x="1387.0" y="111.0" width="4.8" height="1.7" fill="#008000" opacity="0.62"/><rect x="1393.0" y="111.0" width="3.8" height="1.7" fill="#008000" opacity="0.62"/><rect x="1398.0" y="111.0" width="12.8" height="1.7" fill="#008000" opacity="0.62"/><rect x="1412.0" y="111.0" width="3.8" height="1.7" fill="#008000" opacity="0.62"/><rect x="1417.0" y="111.0" width="19.8" height="1.7" fill="#008000" opacity="0.62"/><rect x="1350.0" y="113.0" width="1.8" height="1.7" fill="#008000" opacity="0.62"/><rect x="1353.0" y="113.0" width="23.8" height="1.7" fill="#008000" opacity="0.62"/><rect x="1378.0" y="113.0" width="9.8" height="1.7" fill="#008000" opacity="0.62"/><rect x="1350.0" y="115.0" width="1.8" height="1.7" fill="#008000" opacity="0.62"/><rect x="1350.0" y="117.0" width="1.8" height="1.7" fill="#008000" opacity="0.62"/><rect x="1353.0" y="117.0" width="6.8" height="1.7" fill="#008000" opacity="0.62"/><rect x="1361.0" y="117.0" width="4.8" height="1.7" fill="#008000" opacity="0.62"/><rect x="1367.0" y="117.0" width="3.8" height="1.7" fill="#008000" opacity="0.62"/><rect x="1372.0" y="117.0" width="1.8" height="1.7" fill="#008000" opacity="0.62"/><rect x="1375.0" y="117.0" width="19.8" height="1.7" fill="#008000" opacity="0.62"/><rect x="1396.0" y="117.0" width="2.8" height="1.7" fill="#008000" opacity="0.62"/><rect x="1400.0" y="117.0" width="2.8" height="1.7" fill="#008000" opacity="0.62"/><rect x="1404.0" y="117.0" width="8.8" height="1.7" fill="#008000" opacity="0.62"/><rect x="1414.0" y="117.0" width="7.8" height="1.7" fill="#008000" opacity="0.62"/><rect x="1350.0" y="121.0" width="5.8" height="1.7" fill="#0000ff" opacity="0.62"/><rect x="1357.0" y="120.8" width="31.0" height="2" fill="#f22a2a"/><rect x="1388.0" y="121.0" width="0.8" height="1.7" fill="#000000" opacity="0.62"/><rect x="1350.0" y="125.0" width="5.8" height="1.7" fill="#0000ff" opacity="0.62"/><rect x="1357.0" y="124.8" width="60.0" height="2" fill="#f22a2a"/><rect x="1417.0" y="125.0" width="0.8" height="1.7" fill="#000000" opacity="0.62"/><rect x="1350.0" y="129.0" width="4.8" height="1.7" fill="#0000ff" opacity="0.62"/><rect x="1356.0" y="129.0" width="14.8" height="1.7" fill="#001080" opacity="0.62"/><rect x="1372.0" y="129.0" width="0.8" height="1.7" fill="#000000" opacity="0.62"/><rect x="1374.0" y="129.0" width="83.6" height="1.7" fill="#a31515" opacity="0.62"/><rect x="1350.0" y="133.0" width="3.8" height="1.7" fill="#0000ff" opacity="0.62"/><rect x="1355.0" y="133.0" width="3.8" height="1.7" fill="#795e26" opacity="0.62"/><rect x="1359.0" y="133.0" width="1.8" height="1.7" fill="#0431fa" opacity="0.62"/><rect x="1362.0" y="133.0" width="0.8" height="1.7" fill="#0431fa" opacity="0.62"/><rect x="1352.0" y="134.8" width="6.0" height="2" fill="#f22a2a"/><rect x="1358.0" y="135.0" width="0.8" height="1.7" fill="#319331" opacity="0.62"/><rect x="1359.0" y="135.0" width="4.8" height="1.7" fill="#0000ff" opacity="0.62"/><rect x="1365.0" y="135.0" width="4.8" height="1.7" fill="#267f99" opacity="0.62"/><rect x="1370.0" y="135.0" width="1.8" height="1.7" fill="#7b3814" opacity="0.62"/><rect x="1372.0" y="135.0" width="0.8" height="1.7" fill="#319331" opacity="0.62"/><rect x="1373.0" y="135.0" width="0.8" height="1.7" fill="#000000" opacity="0.62"/><rect x="1350.0" y="137.0" width="0.8" height="1.7" fill="#0431fa" opacity="0.62"/><rect x="1350.0" y="141.0" width="4.8" height="1.7" fill="#0000ff" opacity="0.62"/><rect x="1356.0" y="141.0" width="4.8" height="1.7" fill="#267f99" opacity="0.62"/><rect x="1362.0" y="141.0" width="6.8" height="1.7" fill="#0000ff" opacity="0.62"/><rect x="1370.0" y="140.8" width="15.0" height="2" fill="#f22a2a"/><rect x="1386.0" y="141.0" width="0.8" height="1.7" fill="#0431fa" opacity="0.62"/><rect x="1352.0" y="143.0" width="4.8" height="1.7" fill="#0000ff" opacity="0.62"/><rect x="1358.0" y="143.0" width="4.8" height="1.7" fill="#267f99" opacity="0.62"/><rect x="1363.0" y="143.0" width="0.8" height="1.7" fill="#319331" opacity="0.62"/><rect x="1364.0" y="143.0" width="0.8" height="1.7" fill="#7b3814" opacity="0.62"/><rect x="1365.0" y="143.0" width="4.8" height="1.7" fill="#0000ff" opacity="0.62"/><rect x="1370.0" y="143.0" width="0.8" height="1.7" fill="#000000" opacity="0.62"/><rect x="1371.0" y="142.8" width="3.0" height="2" fill="#f22a2a"/><rect x="1374.0" y="143.0" width="0.8" height="1.7" fill="#7b3814" opacity="0.62"/><rect x="1375.0" y="143.0" width="0.8" height="1.7" fill="#319331" opacity="0.62"/><rect x="1376.0" y="143.0" width="0.8" height="1.7" fill="#000000" opacity="0.62"/><rect x="1352.0" y="147.0" width="8.8" height="1.7" fill="#001080" opacity="0.62"/><rect x="1352.0" y="148.8" width="6.0" height="2" fill="#f22a2a"/><rect x="1359.0" y="148.8" width="5.0" height="2" fill="#c99a1a"/><rect x="1364.0" y="149.0" width="0.8" height="1.7" fill="#319331" opacity="0.62"/><rect x="1365.0" y="148.8" width="12.0" height="2" fill="#f22a2a"/><rect x="1378.0" y="149.0" width="6.8" height="1.7" fill="#001080" opacity="0.62"/><rect x="1385.0" y="149.0" width="0.8" height="1.7" fill="#319331" opacity="0.62"/><rect x="1387.0" y="149.0" width="0.8" height="1.7" fill="#319331" opacity="0.62"/><rect x="1354.0" y="151.0" width="5.8" height="1.7" fill="#af00db" opacity="0.62"/><rect x="1361.0" y="151.0" width="4.8" height="1.7" fill="#0000ff" opacity="0.62"/><rect x="1367.0" y="150.8" width="11.0" height="2" fill="#f22a2a"/><rect x="1378.0" y="151.0" width="0.8" height="1.7" fill="#7b3814" opacity="0.62"/><rect x="1356.0" y="153.0" width="25.8" height="1.7" fill="#001080" opacity="0.62"/><rect x="1382.0" y="153.0" width="0.8" height="1.7" fill="#000000" opacity="0.62"/><rect x="1384.0" y="153.0" width="4.8" height="1.7" fill="#0000ff" opacity="0.62"/><rect x="1389.0" y="153.0" width="0.8" height="1.7" fill="#000000" opacity="0.62"/><rect x="1356.0" y="155.0" width="4.8" height="1.7" fill="#001080" opacity="0.62"/><rect x="1361.0" y="155.0" width="0.8" height="1.7" fill="#000000" opacity="0.62"/><rect x="1363.0" y="155.0" width="5.8" height="1.7" fill="#a31515" opacity="0.62"/><rect x="1370.0" y="155.0" width="3.8" height="1.7" fill="#a31515" opacity="0.62"/><rect x="1374.0" y="155.0" width="0.8" height="1.7" fill="#000000" opacity="0.62"/><rect x="1356.0" y="157.0" width="3.8" height="1.7" fill="#001080" opacity="0.62"/><rect x="1360.0" y="157.0" width="0.8" height="1.7" fill="#000000" opacity="0.62"/><rect x="1362.0" y="157.0" width="9.8" height="1.7" fill="#267f99" opacity="0.62"/><rect x="1372.0" y="157.0" width="1.8" height="1.7" fill="#0431fa" opacity="0.62"/><rect x="1374.0" y="157.0" width="0.8" height="1.7" fill="#000000" opacity="0.62"/><rect x="1354.0" y="159.0" width="0.8" height="1.7" fill="#7b3814" opacity="0.62"/><rect x="1355.0" y="159.0" width="0.8" height="1.7" fill="#000000" opacity="0.62"/><rect x="1357.0" y="159.0" width="1.8" height="1.7" fill="#8a8a8a" opacity="0.62"/><rect x="1360.0" y="159.0" width="10.8" height="1.7" fill="#8a8a8a" opacity="0.62"/><rect x="1352.0" y="161.0" width="0.8" height="1.7" fill="#319331" opacity="0.62"/><rect x="1350.0" y="163.0" width="0.8" height="1.7" fill="#0431fa" opacity="0.62"/><rect x="1350.0" y="167.0" width="4.8" height="1.7" fill="#0000ff" opacity="0.62"/><rect x="1356.0" y="167.0" width="9.8" height="1.7" fill="#267f99" opacity="0.62"/><rect x="1367.0" y="167.0" width="6.8" height="1.7" fill="#0000ff" opacity="0.62"/><rect x="1375.0" y="166.8" width="14.0" height="2" fill="#f22a2a"/><rect x="1390.0" y="167.0" width="0.8" height="1.7" fill="#0431fa" opacity="0.62"/><rect x="1352.0" y="169.0" width="4.8" height="1.7" fill="#0000ff" opacity="0.62"/><rect x="1358.0" y="169.0" width="9.8" height="1.7" fill="#267f99" opacity="0.62"/><rect x="1368.0" y="169.0" width="0.8" height="1.7" fill="#319331" opacity="0.62"/><rect x="1369.0" y="169.0" width="0.8" height="1.7" fill="#7b3814" opacity="0.62"/><rect x="1370.0" y="169.0" width="4.8" height="1.7" fill="#0000ff" opacity="0.62"/><rect x="1375.0" y="169.0" width="0.8" height="1.7" fill="#000000" opacity="0.62"/><rect x="1376.0" y="168.8" width="3.0" height="2" fill="#f22a2a"/><rect x="1379.0" y="169.0" width="0.8" height="1.7" fill="#7b3814" opacity="0.62"/><rect x="1380.0" y="169.0" width="0.8" height="1.7" fill="#319331" opacity="0.62"/><rect x="1381.0" y="169.0" width="0.8" height="1.7" fill="#000000" opacity="0.62"/><rect x="1352.0" y="173.0" width="8.8" height="1.7" fill="#001080" opacity="0.62"/><rect x="1352.0" y="174.8" width="5.0" height="2" fill="#f22a2a"/><rect x="1357.0" y="175.0" width="0.8" height="1.7" fill="#000000" opacity="0.62"/><rect x="1358.0" y="175.0" width="9.8" height="1.7" fill="#267f99" opacity="0.62"/><rect x="1368.0" y="175.0" width="0.8" height="1.7" fill="#000000" opacity="0.62"/><rect x="1370.0" y="174.8" width="11.0" height="2" fill="#c99a1a"/><rect x="1381.0" y="175.0" width="1.8" height="1.7" fill="#319331" opacity="0.62"/><rect x="1384.0" y="175.0" width="1.8" height="1.7" fill="#000000" opacity="0.62"/><rect x="1387.0" y="175.0" width="15.8" height="1.7" fill="#267f99" opacity="0.62"/><rect x="1403.0" y="175.0" width="1.8" height="1.7" fill="#319331" opacity="0.62"/><rect x="1405.0" y="175.0" width="0.8" height="1.7" fill="#000000" opacity="0.62"/><rect x="1350.0" y="177.0" width="0.8" height="1.7" fill="#0431fa" opacity="0.62"/><rect x="1350.0" y="181.0" width="4.8" height="1.7" fill="#0000ff" opacity="0.62"/><rect x="1356.0" y="181.0" width="15.8" height="1.7" fill="#267f99" opacity="0.62"/><rect x="1373.0" y="181.0" width="6.8" height="1.7" fill="#0000ff" opacity="0.62"/><rect x="1381.0" y="180.8" width="5.0" height="2" fill="#f22a2a"/><rect x="1386.0" y="181.0" width="0.8" height="1.7" fill="#000000" opacity="0.62"/><rect x="1387.0" y="181.0" width="9.8" height="1.7" fill="#267f99" opacity="0.62"/><rect x="1397.0" y="181.0" width="0.8" height="1.7" fill="#000000" opacity="0.62"/><rect x="1399.0" y="181.0" width="0.8" height="1.7" fill="#0431fa" opacity="0.62"/><rect x="1352.0" y="183.0" width="8.8" height="1.7" fill="#001080" opacity="0.62"/><rect x="1352.0" y="185.0" width="3.8" height="1.7" fill="#0000ff" opacity="0.62"/><rect x="1357.0" y="184.8" width="7.0" height="2" fill="#c99a1a"/><rect x="1364.0" y="185.0" width="1.8" height="1.7" fill="#319331" opacity="0.62"/><rect x="1367.0" y="185.0" width="0.8" height="1.7" fill="#319331" opacity="0.62"/><rect x="1354.0" y="186.8" width="6.0" height="2" fill="#f22a2a"/><rect x="1360.0" y="187.0" width="0.8" height="1.7" fill="#000000" opacity="0.62"/><rect x="1361.0" y="187.0" width="6.8" height="1.7" fill="#795e26" opacity="0.62"/><rect x="1368.0" y="187.0" width="1.8" height="1.7" fill="#7b3814" opacity="0.62"/><rect x="1370.0" y="187.0" width="0.8" height="1.7" fill="#000000" opacity="0.62"/><rect x="1354.0" y="189.0" width="4.8" height="1.7" fill="#0000ff" opacity="0.62"/><rect x="1359.0" y="189.0" width="0.8" height="1.7" fill="#000000" opacity="0.62"/><rect x="1360.0" y="188.8" width="7.0" height="2" fill="#f22a2a"/><rect x="1367.0" y="189.0" width="1.8" height="1.7" fill="#7b3814" opacity="0.62"/><rect x="1369.0" y="189.0" width="0.8" height="1.7" fill="#000000" opacity="0.62"/><rect x="1352.0" y="191.0" width="0.8" height="1.7" fill="#319331" opacity="0.62"/><rect x="1352.0" y="195.0" width="8.8" height="1.7" fill="#001080" opacity="0.62"/><rect x="1352.0" y="196.8" width="6.0" height="2" fill="#f22a2a"/><rect x="1359.0" y="196.8" width="5.0" height="2" fill="#c99a1a"/><rect x="1364.0" y="197.0" width="0.8" height="1.7" fill="#319331" opacity="0.62"/><rect x="1365.0" y="196.8" width="12.0" height="2" fill="#f22a2a"/><rect x="1378.0" y="197.0" width="6.8" height="1.7" fill="#001080" opacity="0.62"/><rect x="1385.0" y="197.0" width="0.8" height="1.7" fill="#319331" opacity="0.62"/><rect x="1387.0" y="197.0" width="0.8" height="1.7" fill="#319331" opacity="0.62"/><rect x="1354.0" y="199.0" width="5.8" height="1.7" fill="#af00db" opacity="0.62"/><rect x="1361.0" y="198.8" width="8.0" height="2" fill="#f22a2a"/><rect x="1369.0" y="199.0" width="0.8" height="1.7" fill="#7b3814" opacity="0.62"/><rect x="1356.0" y="201.0" width="5.8" height="1.7" fill="#001080" opacity="0.62"/><rect x="1362.0" y="201.0" width="0.8" height="1.7" fill="#000000" opacity="0.62"/><rect x="1364.0" y="200.8" width="6.0" height="2" fill="#f22a2a"/><rect x="1370.0" y="201.0" width="0.8" height="1.7" fill="#0431fa" opacity="0.62"/><rect x="1358.0" y="203.0" width="14.8" height="1.7" fill="#001080" opacity="0.62"/><rect x="1373.0" y="203.0" width="0.8" height="1.7" fill="#000000" opacity="0.62"/><rect x="1375.0" y="202.8" width="6.0" height="2" fill="#f22a2a"/><rect x="1381.0" y="203.0" width="0.8" height="1.7" fill="#000000" opacity="0.62"/><rect x="1382.0" y="203.0" width="9.8" height="1.7" fill="#001080" opacity="0.62"/><rect x="1392.0" y="203.0" width="0.8" height="1.7" fill="#319331" opacity="0.62"/><rect x="1393.0" y="203.0" width="2.8" height="1.7" fill="#0000ff" opacity="0.62"/><rect x="1396.0" y="203.0" width="0.8" height="1.7" fill="#319331" opacity="0.62"/><rect x="1397.0" y="203.0" width="0.8" height="1.7" fill="#000000" opacity="0.62"/><rect x="1358.0" y="205.0" width="4.8" height="1.7" fill="#001080" opacity="0.62"/><rect x="1363.0" y="205.0" width="0.8" height="1.7" fill="#000000" opacity="0.62"/><rect x="1365.0" y="205.0" width="4.8" height="1.7" fill="#0000ff" opacity="0.62"/><rect x="1371.0" y="204.8" width="4.0" height="2" fill="#f22a2a"/><rect x="1375.0" y="205.0" width="0.8" height="1.7" fill="#319331" opacity="0.62"/><rect x="1376.0" y="205.0" width="5.8" height="1.7" fill="#a31515" opacity="0.62"/><rect x="1383.0" y="205.0" width="3.8" height="1.7" fill="#a31515" opacity="0.62"/><rect x="1387.0" y="205.0" width="0.8" height="1.7" fill="#000000" opacity="0.62"/><rect x="1389.0" y="205.0" width="4.8" height="1.7" fill="#001080" opacity="0.62"/><rect x="1394.0" y="205.0" width="0.8" height="1.7" fill="#000000" opacity="0.62"/><rect x="1396.0" y="204.8" width="9.0" height="2" fill="#f22a2a"/><rect x="1405.0" y="205.0" width="0.8" height="1.7" fill="#7b3814" opacity="0.62"/><rect x="1406.0" y="205.0" width="4.8" height="1.7" fill="#001080" opacity="0.62"/><rect x="1411.0" y="205.0" width="0.8" height="1.7" fill="#000000" opacity="0.62"/><rect x="1413.0" y="204.8" width="6.0" height="2" fill="#f22a2a"/><rect x="1419.0" y="205.0" width="0.8" height="1.7" fill="#000000" opacity="0.62"/><rect x="1420.0" y="205.0" width="4.8" height="1.7" fill="#001080" opacity="0.62"/><rect x="1425.0" y="205.0" width="0.8" height="1.7" fill="#7b3814" opacity="0.62"/><rect x="1426.0" y="205.0" width="0.8" height="1.7" fill="#319331" opacity="0.62"/><rect x="1427.0" y="205.0" width="0.8" height="1.7" fill="#000000" opacity="0.62"/><rect x="1356.0" y="207.0" width="0.8" height="1.7" fill="#0431fa" opacity="0.62"/><rect x="1357.0" y="207.0" width="0.8" height="1.7" fill="#000000" opacity="0.62"/><rect x="1356.0" y="209.0" width="3.8" height="1.7" fill="#001080" opacity="0.62"/><rect x="1360.0" y="209.0" width="0.8" height="1.7" fill="#000000" opacity="0.62"/><rect x="1362.0" y="209.0" width="4.8" height="1.7" fill="#0000ff" opacity="0.62"/><rect x="1368.0" y="208.8" width="6.0" height="2" fill="#f22a2a"/><rect x="1374.0" y="209.0" width="0.8" height="1.7" fill="#0431fa" opacity="0.62"/><rect x="1358.0" y="211.0" width="2.8" height="1.7" fill="#001080" opacity="0.62"/><rect x="1361.0" y="211.0" width="0.8" height="1.7" fill="#000000" opacity="0.62"/><rect x="1363.0" y="210.8" width="8.0" height="2" fill="#f22a2a"/><rect x="1371.0" y="211.0" width="0.8" height="1.7" fill="#319331" opacity="0.62"/><rect x="1372.0" y="211.0" width="7.8" height="1.7" fill="#a31515" opacity="0.62"/><rect x="1380.0" y="211.0" width="0.8" height="1.7" fill="#319331" opacity="0.62"/><rect x="1381.0" y="211.0" width="0.8" height="1.7" fill="#000000" opacity="0.62"/><rect x="1358.0" y="213.0" width="15.8" height="1.7" fill="#001080" opacity="0.62"/><rect x="1374.0" y="213.0" width="0.8" height="1.7" fill="#000000" opacity="0.62"/><rect x="1376.0" y="213.0" width="14.8" height="1.7" fill="#001080" opacity="0.62"/><rect x="1391.0" y="213.0" width="0.8" height="1.7" fill="#000000" opacity="0.62"/><rect x="1356.0" y="215.0" width="0.8" height="1.7" fill="#0431fa" opacity="0.62"/><rect x="1357.0" y="215.0" width="0.8" height="1.7" fill="#000000" opacity="0.62"/><rect x="1354.0" y="217.0" width="0.8" height="1.7" fill="#7b3814" opacity="0.62"/><rect x="1355.0" y="217.0" width="0.8" height="1.7" fill="#000000" opacity="0.62"/><rect x="1352.0" y="219.0" width="0.8" height="1.7" fill="#319331" opacity="0.62"/><rect x="1350.0" y="221.0" width="0.8" height="1.7" fill="#0431fa" opacity="0.62"/><rect x="1457.6" y="110.4" width="1" height="813.2" fill="#ececec"/><rect x="1458" y="111" width="15" height="1.9" fill="#3a3a3a"/><rect x="1468.6" y="152.8" width="4.4" height="8.9" fill="#ff5a5a"/><rect x="1468.6" y="170.9" width="4.4" height="7.8" fill="#ff5a5a"/><rect x="1468.6" y="221" width="4.4" height="7.7" fill="#ff5a5a"/><rect x="1468.6" y="246.4" width="4.4" height="17.0" fill="#ff5a5a"/><rect x="1468.6" y="280.3" width="4.4" height="9.7" fill="#e8260a"/><rect x="1468.6" y="290" width="4.4" height="7.2" fill="#ff5a5a"/><rect x="1468.6" y="357.8" width="4.4" height="18.2" fill="#ff5a5a"/><rect x="1468.6" y="393" width="4.4" height="7.7" fill="#e8260a"/><rect x="1468.6" y="419" width="4.4" height="7.8" fill="#ff5a5a"/><rect x="1468.6" y="436" width="4.4" height="7.8" fill="#bf8803"/><rect x="1468.6" y="443.8" width="4.4" height="18.2" fill="#ff5a5a"/><rect x="1468.6" y="486.9" width="4.4" height="8.9" fill="#e8260a"/><rect x="1468.6" y="495.8" width="4.4" height="26.7" fill="#ff5a5a"/><rect x="1468.6" y="538.7" width="4.4" height="16.3" fill="#ff5a5a"/></svg>
<svg style="left:0.00px;top:0.00px;" width="1473" height="950" viewBox="0 0 1473 950"><path d="M1217 467.6 V479.6 L1219.9 477 L1222.2 482.4 L1224.3 481.5 L1222 476.6 H1226.4 Z" fill="#000" stroke="#fff" stroke-width="1.8" stroke-linejoin="round" paint-order="stroke"/></svg>
<div class="status"></div>
<div class="abs" style="left:854.6px;top:923.6px;width:37.8px;height:26.4px;background:#013e6d"></div>
<svg style="left:0;top:0" width="1473" height="950" viewBox="0 0 1473 950"><path d="M13.2 934.1 L18 938.5 L13.2 943 M23.8 930.2 L19.9 934.4 L23.8 938.6" fill="none" stroke="#fff" stroke-width="1.25" opacity="0.92"/><circle cx="51.6" cy="931" r="2.1" fill="none" stroke="#fff" stroke-width="1.1"/><circle cx="51.6" cy="941.6" r="2.1" fill="none" stroke="#fff" stroke-width="1.1"/><circle cx="61.3" cy="935.9" r="2.1" fill="none" stroke="#fff" stroke-width="1.1"/><path d="M51.6 933.2 V939.4 M56.5 928.4 V945.2 M61.3 938.1 C61.3 941 59 941.6 53.8 941.6" fill="none" stroke="#fff" stroke-width="1.1"/><g transform="translate(96.5 936) rotate(45)" fill="none" stroke="#fff" stroke-width="1.15" stroke-linejoin="round" opacity="0.92"><path d="M0 -8.2 C4.4 -6.6 4.2 -0.8 2.7 3.2 H-2.7 C-4.2 -0.8 -4.4 -6.6 0 -8.2 Z"/><circle cx="0" cy="-2.2" r="1.4"/><path d="M-3.2 -0.4 L-5.4 2.8 L-3 3.2 M3.2 -0.4 L5.4 2.8 L3 3.2"/><path d="M-1.6 4.6 V6.6 M1.6 4.6 V6.6 M0 5 V8.4" stroke-width="1"/></g><g transform="translate(114.5 935.9) rotate(50)" fill="none" stroke="#fff" stroke-width="1.15" stroke-linejoin="round" opacity="0.92"><path d="M-3.1 -2.7 H3.1 V-4.4 a3.1 3.1 0 0 0 -6.2 0 Z M0 -7.5 V-10.4"/><path d="M-3.4 2.9 H3.4 V4 a3.4 3.4 0 0 1 -6.8 0 Z M0 7.4 V10.4 M-1.5 2.9 V0.3 M1.5 2.9 V0.3"/></g><circle cx="232.1" cy="936.8" r="7.1" fill="none" stroke="#fff" stroke-width="1.15" opacity="0.92"/><path d="M229.1 933.8 L235.1 939.8 M235.1 933.8 L229.1 939.8" stroke="#fff" stroke-width="1.15" opacity="0.92"/><path d="M277.8 930.2 L285 942 H270.6 Z" fill="none" stroke="#fff" stroke-width="1.15" stroke-linejoin="round" opacity="0.92"/><path d="M277.8 934 V938.4 M277.8 939.6 V940.8" stroke="#fff" stroke-width="1.2"/><circle cx="871.8" cy="934.4" r="6" fill="none" stroke="#fff" stroke-width="1.2" opacity="0.9"/><path d="M876.2 938.8 L881 943.6 M868.8 934.4 H874.8 M871.8 931.4 V937.4" stroke="#fff" stroke-width="1.2" opacity="0.9"/><path d="M1151 929.6 C1148.6 929.6 1149.4 932 1149.2 934 C1149 935.6 1148 936.2 1147 936.3 C1148 936.4 1149 937 1149.2 938.6 C1149.4 940.6 1148.6 943 1151 943" fill="none" stroke="#fff" stroke-width="1.1" opacity="0.9"/><path d="M1157.6 929.6 C1160 929.6 1159.2 932 1159.4 934 C1159.6 935.6 1160.6 936.2 1161.6 936.3 C1160.6 936.4 1159.6 937 1159.4 938.6 C1159.2 940.6 1160 943 1157.6 943" fill="none" stroke="#fff" stroke-width="1.1" opacity="0.9"/><path d="M1221.6 935.6 C1219.8 937 1219.8 938.8 1220.2 940 C1221.6 942.6 1225 943.8 1229.2 943.8 C1233.4 943.8 1236.8 942.6 1238.2 940 C1238.6 938.8 1238.6 937 1236.8 935.6" fill="none" stroke="#fff" stroke-width="2"/><rect x="1222.2" y="929.1" width="6.6" height="6.6" rx="3.1" fill="none" stroke="#fff" stroke-width="2"/><rect x="1229.6" y="929.1" width="6.6" height="6.6" rx="3.1" fill="none" stroke="#fff" stroke-width="2"/><rect x="1226.1" y="937.9" width="1.7" height="2.9" fill="#fff"/><rect x="1230.5" y="937.9" width="1.7" height="2.9" fill="#fff"/><path d="M1450.4 940.6 V935.4 a5 5.6 0 0 1 10 0 V940.6 L1462.4 942.6 H1448.4 Z" fill="none" stroke="#fff" stroke-width="1.1" stroke-linejoin="round" opacity="0.9"/><path d="M1453.8 943 a1.7 1.4 0 0 0 3.4 0" fill="none" stroke="#fff" stroke-width="1" opacity="0.9"/></svg>
<div class="t" style="left:128.80px;top:925.00px;height:24px;line-height:24px;font-size:14.4px;color:#fff;letter-spacing:0.330px;-webkit-text-stroke:0.18px #fff;">Launchpad</div>
<div class="t" style="left:246.20px;top:925.00px;height:24px;line-height:24px;font-size:14.4px;color:#fff;letter-spacing:0.692px;-webkit-text-stroke:0.18px #fff;">38</div>
<div class="t" style="left:291.60px;top:925.00px;height:24px;line-height:24px;font-size:14.4px;color:#fff;-webkit-text-stroke:0.18px #fff;">5</div>
<div class="t" style="left:902.90px;top:925.00px;height:24px;line-height:24px;font-size:14.4px;color:#fff;letter-spacing:0.172px;-webkit-text-stroke:0.18px #fff;">Ln 1, Col 1</div>
<div class="t" style="left:995.60px;top:925.00px;height:24px;line-height:24px;font-size:14.4px;color:#fff;letter-spacing:0.256px;-webkit-text-stroke:0.18px #fff;">Spaces: 2</div>
<div class="t" style="left:1082.00px;top:925.00px;height:24px;line-height:24px;font-size:14.4px;color:#fff;letter-spacing:0.384px;-webkit-text-stroke:0.18px #fff;">UTF-8</div>
<div class="t" style="left:1171.30px;top:925.00px;height:24px;line-height:24px;font-size:14.4px;color:#fff;letter-spacing:0.303px;-webkit-text-stroke:0.18px #fff;">Dart</div>
<div class="t" style="left:1258.20px;top:925.00px;height:24px;line-height:24px;font-size:14.4px;color:#fff;letter-spacing:0.459px;-webkit-text-stroke:0.18px #fff;">Chrome (web-javascript)</div>
</div>
</body></html>
